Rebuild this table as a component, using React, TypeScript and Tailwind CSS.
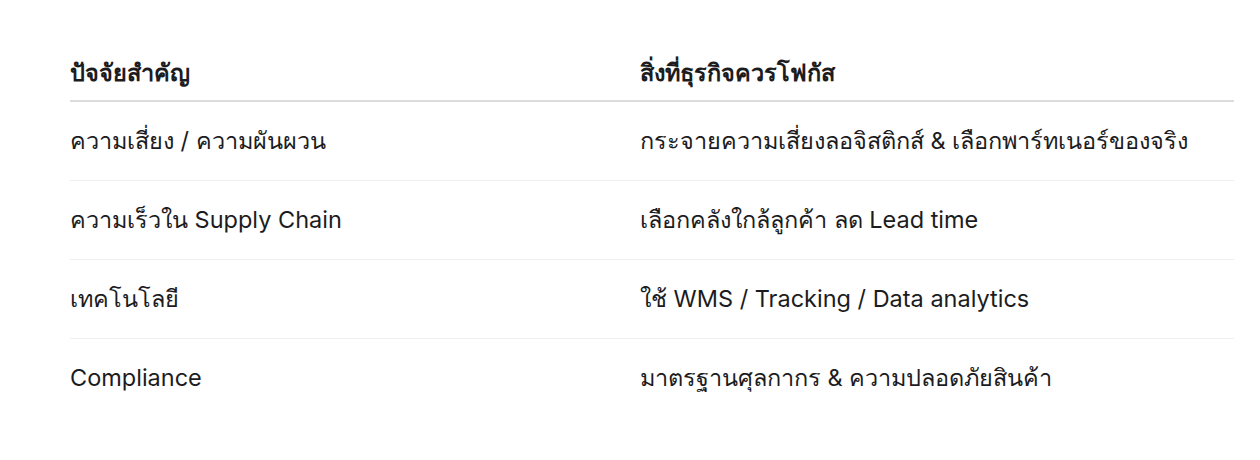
import React from "react";

const rows: [string, string][] = [
  ["ความเสี่ยง / ความผันผวน", "กระจายความเสี่ยงลอจิสติกส์ & เลือกพาร์ทเนอร์ของจริง"],
  ["ความเร็วใน Supply Chain", "เลือกคลังใกล้ลูกค้า ลด Lead time"],
  ["เทคโนโลยี", "ใช้ WMS / Tracking / Data analytics"],
  ["Compliance", "มาตรฐานศุลกากร & ความปลอดภัยสินค้า"],
];

export default function App() {
  return (
    <div className="w-[1260px] h-[460px] bg-white pt-[45px] font-['Inter','Noto_Sans',sans-serif] text-[#1c1c1e]">
      <table className="ml-[70px] w-[1164px] border-collapse text-left text-[23.5px] leading-[28px]">
        <thead>
          <tr className="border-b-2 border-[#dcdcdc]">
            <th className="w-[570px] pt-[14px] pb-[13px] font-bold">ปัจจัยสำคัญ</th>
            <th className="pt-[14px] pb-[13px] font-bold">สิ่งที่ธุรกิจควรโฟกัส</th>
          </tr>
        </thead>
        <tbody>
          {rows.map(([a, b], i) => (
            <tr key={i} className={i < rows.length - 1 ? "border-b border-[#efefef]" : ""}>
              <td className="py-[25px]">{a}</td>
              <td className="py-[25px]">{b}</td>
            </tr>
          ))}
        </tbody>
      </table>
    </div>
  );
}
